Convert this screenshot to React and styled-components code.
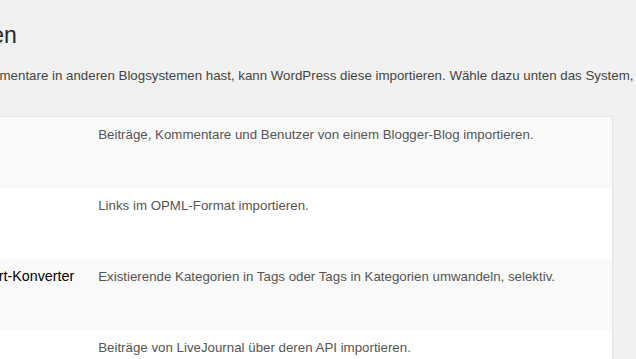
import React from "react";
import styled, { createGlobalStyle } from "styled-components";

const Global = createGlobalStyle`
  html, body { margin: 0; padding: 0; background: #f1f1f1; }
  body {
    font-family: "Liberation Sans", Arial, sans-serif;
    color: #444;
    font-size: 13px;
    line-height: 1.5;
    overflow: hidden;
    width: 636px;
    height: 359px;
  }
`;

const Page = styled.div`
  width: 636px;
  height: 359px;
  overflow: hidden;
`;

const Wrap = styled.div`
  margin-left: -166px;
  width: 779px;
  padding-top: 20px;
`;

const Title = styled.h1`
  margin: 0;
  font-size: 23px;
  font-weight: 400;
  line-height: 30px;
  color: #23282d;
  white-space: nowrap;
`;

const Intro = styled.p`
  margin: 16px 0 0 -2px;
  font-size: 13.3px;
  line-height: 19.5px;
  color: #444;
  white-space: nowrap;
`;

const Table = styled.table`
  margin: 30px 0 0 -14px;
  width: calc(100% + 14px);
  border-collapse: collapse;
  border: 1px solid #e5e5e5;
  box-shadow: 0 1px 1px rgba(0, 0, 0, 0.04);
  background: #fff;
`;

const Row = styled.tr`
  background: ${(p) => (p.$alt ? "#f9f9f9" : "#fff")};
`;

const NameCell = styled.td`
  vertical-align: top;
  padding: 8px 14px 8px 10px;
  height: 55px;
  white-space: nowrap;
  width: 1px;
`;

const DescCell = styled.td`
  vertical-align: top;
  padding: 8px 10px;
  font-size: 13.3px;
  line-height: 19.5px;
  color: #555;
`;

const ImporterTitle = styled.span`
  display: block;
  font-size: 14.3px;
  line-height: 19.5px;
  color: #000;
  margin-bottom: 3px;
`;

const ImporterAction = styled.span`
  display: block;
  font-size: 13px;
  line-height: 20px;
  color: #0073aa;
  visibility: hidden;
`;

const importers = [
  {
    name: "Blogger",
    desc: "Beiträge, Kommentare und Benutzer von einem Blogger-Blog importieren.",
  },
  { name: "Blogroll", desc: "Links im OPML-Format importieren." },
  {
    name: "Kategorien- und Schlagwort-Konverter",
    desc: "Existierende Kategorien in Tags oder Tags in Kategorien umwandeln, selektiv.",
  },
  {
    name: "LiveJournal",
    desc: "Beiträge von LiveJournal über deren API importieren.",
  },
  {
    name: "Movable Type und TypePad",
    desc: "Beiträge und Kommentare aus einem Movable-Type- oder TypePad-Blog importieren.",
  },
];

export default function App() {
  return (
    <Page>
      <Global />
      <Wrap>
        <Title>Daten importieren</Title>
        <Intro>
          Wenn du Beiträge oder Kommentare in anderen Blogsystemen hast, kann
          WordPress diese importieren. Wähle dazu unten das System, aus dem du
          importieren möchtest:
        </Intro>
        <Table>
          <tbody>
            {importers.map((imp, i) => (
              <Row key={imp.name} $alt={i % 2 === 0}>
                <NameCell>
                  <ImporterTitle>{imp.name}</ImporterTitle>
                  <ImporterAction>Jetzt installieren | Details</ImporterAction>
                </NameCell>
                <DescCell>{imp.desc}</DescCell>
              </Row>
            ))}
          </tbody>
        </Table>
      </Wrap>
    </Page>
  );
}
